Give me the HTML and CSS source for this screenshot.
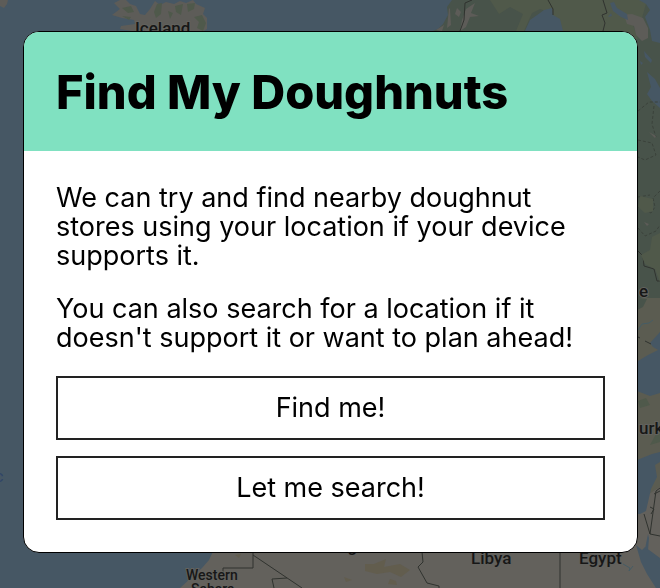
FILE: index.html
```
<!DOCTYPE html>
<html lang="en">
<head>
<meta charset="utf-8">
<meta name="viewport" content="width=device-width, initial-scale=1">
<title>Find My Doughnuts</title>
<link rel="stylesheet" href="styles.css">
</head>
<body>
<svg class="map" viewBox="0 0 660 588" preserveAspectRatio="xMidYMid slice" aria-hidden="true">
  <rect class="sea" width="660" height="588"/>
  <!-- Greenland tip and Iceland -->
  <path class="rock" d="M0 0H8L7 4L4 8L0 6Z"/>
  <path class="rock" d="M120 0L114 3L120 9L112 15L122 18L134 20L135 24L121 26L120 29L132 31L140 36H196L207 29V18L203 14L205 8L196 4L193 0L186 3L180 1L174 4L166 2L160 5L155 1L150 9L145 15L140 14L136 6L130 4L126 0Z"/>
  <path class="moss" d="M157 4L162 3L161 14L156 18L154 12ZM175 6L183 4L181 15L176 12ZM187 4L195 3L194 9L188 12ZM194 17L202 15L206 23L203 31L197 28L199 22ZM122 8L131 6L134 12L128 13ZM122 16L131 17L129 20ZM168 11L173 13L170 19Z"/>
  <!-- Scandinavia and western Russia -->
  <path class="forest" d="M452 0L447 7L448 15L443 24L438 29L430 32V160H630V300H660V0Z"/>
  <path class="woods" d="M490 0H647L642 18L633 25L638 39H560L562 28L552 22L551 13L540 9L532 13L524 31H516L523 14L510 7L499 14Z"/>
  <path class="rock" d="M450 9L451 25L447 28L449 8ZM457 8L461 12L459 17L455 14ZM466 9L475 3L471 13L479 16L470 17L466 27L460 31L462 20ZM436 30L444 25L442 31ZM618 15L632 14L643 18L648 28L648 38L642 41L636 35L634 26L627 24L625 18Z"/>
  <path class="sea" d="M544 10L552 8L553 15L560 19L563 31H525L530 20L540 13ZM610 3L614 2L617 8L627 14L628 20L621 17L613 11ZM639 0H660V43L652 41L650 30L645 17L650 10L646 4ZM644 51L652 60L651 63L645 57ZM647 72L655 79L660 88V108L652 101L647 94L651 87ZM640 61L643 63L641 65ZM611 13L608 17L612 16Z"/>
  <path class="border" d="M472 0L465 3L464 20L460 31M548 0L553 9V15M603 0L607 13L602 15L605 23L603 31M638 251L643 256L644 266L654 269L657 281H660"/>
  <path class="region" d="M638 111L649 102H660M654 106L652 124L656 137M638 140L652 143L656 155L645 160L638 157M660 191L653 198L655 207L651 213L638 207M638 228L645 236L656 231L660 225M638 197L650 195"/>
  <path class="woods" d="M640 196L653 199L653 211L645 213L638 207ZM652 237L660 233V282L655 269L645 264L641 255L650 250Z"/>
  <path class="rock" d="M649 132L656 136L655 138ZM644 222L649 224L647 226Z"/>
  <!-- Black Sea coast and Turkey -->
  <path class="steppe" d="M630 298H660V588H630Z"/>
  <path class="forest" d="M638 298L647 299L643 307L637 310Z"/>
  <path class="sea" d="M638 361L648 355L660 349V393L650 396L637 391ZM650 343L660 332V351L653 347Z"/>
  <path class="river" d="M638 330L642 324L649 323L653 320"/>
  <path class="border" d="M638 337L640 338M645 341L651 344M638 473L642 471"/>
  <path class="moss" d="M638 401L646 398L650 405L640 408ZM656 434L660 432V442L650 445Z"/>
  <!-- North Africa -->
  <path class="sand" d="M216 545H625L638 514L649 494L660 487V588H180L202 568L209 560Z"/>
  <path class="sea" d="M637 460L652 454L660 452V462L655 465L657 477L651 489L646 511L640 514H635ZM636 545L642 550L645 547L660 558V588H656L647 574L641 562Z"/>
  <path class="sea" d="M648 534L649 538L648 550L645 549Z"/>
  <path class="border" d="M253 552V568H223V575M253 555L302 588M274 588L272 579L287 578M422 552L423 562L418 567L427 583L439 586V588M560 552V588M644 514L650 534L656 491L660 488M650 534L660 536M650 507L654 509L651 514M654 494L660 491"/>
  <path class="dune" d="M374 564L386 559L384 567L400 564L410 570L401 577L390 572L377 574L365 571V564ZM344 577L352 580L346 582ZM390 579L396 581L397 585L388 584ZM235 555L241 554L239 558Z"/>
  <path class="river" d="M623 564L630 568L629 571L633 566"/>
  <text class="place big" x="135" y="34">Iceland</text>
  <text class="place big" x="639" y="297">e</text>
  <text class="place big" x="639" y="434">urk</text>
  <text class="place big" x="332" y="552">Algeria</text>
  <text class="place big" x="471" y="564">Libya</text>
  <text class="place big" x="579" y="564">Egypt</text>
  <text class="place" x="186" y="580">Western</text>
  <text class="place" x="191" y="594">Sahara</text>
  <text class="ocean" x="-5" y="482">c</text>
</svg>
<main class="overlay">
  <section class="dialog" role="dialog" aria-labelledby="title">
    <header class="dialog-header"><h1 id="title">Find My Doughnuts</h1></header>
    <div class="dialog-body">
      <p>We can try and find nearby doughnut stores using your location if your device supports it.</p>
      <p>You can also search for a location if it doesn't support it or want to plan ahead!</p>
      <div class="actions">
        <button type="button">Find me!</button>
        <button type="button">Let me search!</button>
      </div>
    </div>
  </section>
</main>
</body>
</html>
```
FILE: styles.css
```
* {
  box-sizing: border-box;
}

body {
  margin: 0;
  background: #465764;
  color: #000;
  font-family: Inter, "Liberation Sans", sans-serif;
  font-size: 27px;
  line-height: 29px;
}

.map {
  position: fixed;
  inset: 0;
  width: 100%;
  height: 100%;
}

.sea { fill: #465764; }
.rock { fill: #5d5c58; }
.moss { fill: #4f594b; }
.forest { fill: #48534a; }
.woods { fill: #50594a; }
.steppe { fill: #5b5c51; }
.sand { fill: #63615c; }
.dune { fill: #625d4e; }

.border,
.region,
.river {
  fill: none;
  stroke: #30332f;
  stroke-width: 1;
}

.region {
  stroke: #3b423b;
  stroke-dasharray: 3 2;
}

.river { stroke: #465c65; }

.place {
  fill: #171717;
  stroke: #62625e;
  stroke-width: 2;
  paint-order: stroke;
  font-family: Roboto, sans-serif;
  font-size: 14px;
  font-weight: 500;
}

.big { font-size: 17px; }

.ocean {
  fill: #304568;
  font-family: Roboto, sans-serif;
  font-size: 16px;
}

.overlay {
  position: relative;
  display: grid;
  align-items: center;
  min-height: 100vh;
  padding: 28px 22px 32px 23px;
}

.dialog {
  overflow: hidden;
  border: 1px solid #000;
  border-radius: 16px;
  background: #fff;
}

.dialog-header {
  padding: 32px;
  background: #80e1c1;
}

h1 {
  margin: 0;
  font-size: 47px;
  font-weight: 800;
  line-height: 55px;
}

.dialog-body {
  padding: 32px;
}

p {
  margin: 0 0 24px;
}

.actions {
  display: grid;
  gap: 16px;
}

button {
  width: 100%;
  padding: 16px;
  border: 2px solid #222;
  border-radius: 0;
  background: #fff;
  color: inherit;
  font: inherit;
  line-height: 28px;
}
```
